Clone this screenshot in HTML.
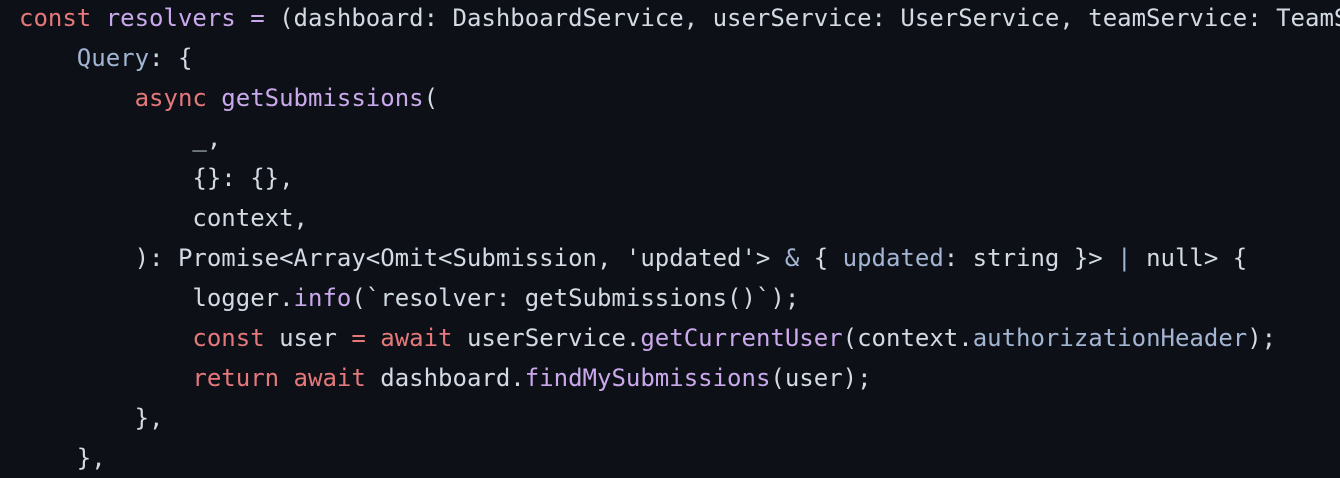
<!DOCTYPE html>
<html><head><meta charset="utf-8"><style>
html,body{margin:0;padding:0;background:#0d1117;width:1340px;height:478px;overflow:hidden}
pre{position:absolute;left:19px;top:-2px;width:1321px;overflow:hidden;margin:0;font-family:"DejaVu Sans Mono","Liberation Mono",monospace;font-size:24px;line-height:40px;color:#d3dae3;white-space:pre;letter-spacing:0}
.k{color:#e5787a}.f{color:#c9a8ec}.p{color:#a3b5d3}
</style></head><body><pre><span class="k">const</span> <span class="f">resolvers</span> <span class="f">=</span> (dashboard: DashboardService, userService: UserService, teamService: TeamService
    <span class="p">Query</span>: {
        <span class="k">async</span> <span class="f">getSubmissions</span>(
            _,
            {}: {},
            context,
        ): Promise&lt;Array&lt;Omit&lt;Submission, 'updated'&gt; <span class="p">&amp;</span> { <span class="p">updated</span>: string }&gt; <span class="p">|</span> null&gt; {
            logger.<span class="f">info</span>(`resolver: getSubmissions()`);
            <span class="k">const</span> user <span class="k">=</span> <span class="k">await</span> userService.<span class="f">getCurrentUser</span>(context.<span class="p">authorizationHeader</span>);
            <span class="k">return</span> <span class="k">await</span> dashboard.<span class="f">findMySubmissions</span>(user);
        },
    },
</pre></body></html>
